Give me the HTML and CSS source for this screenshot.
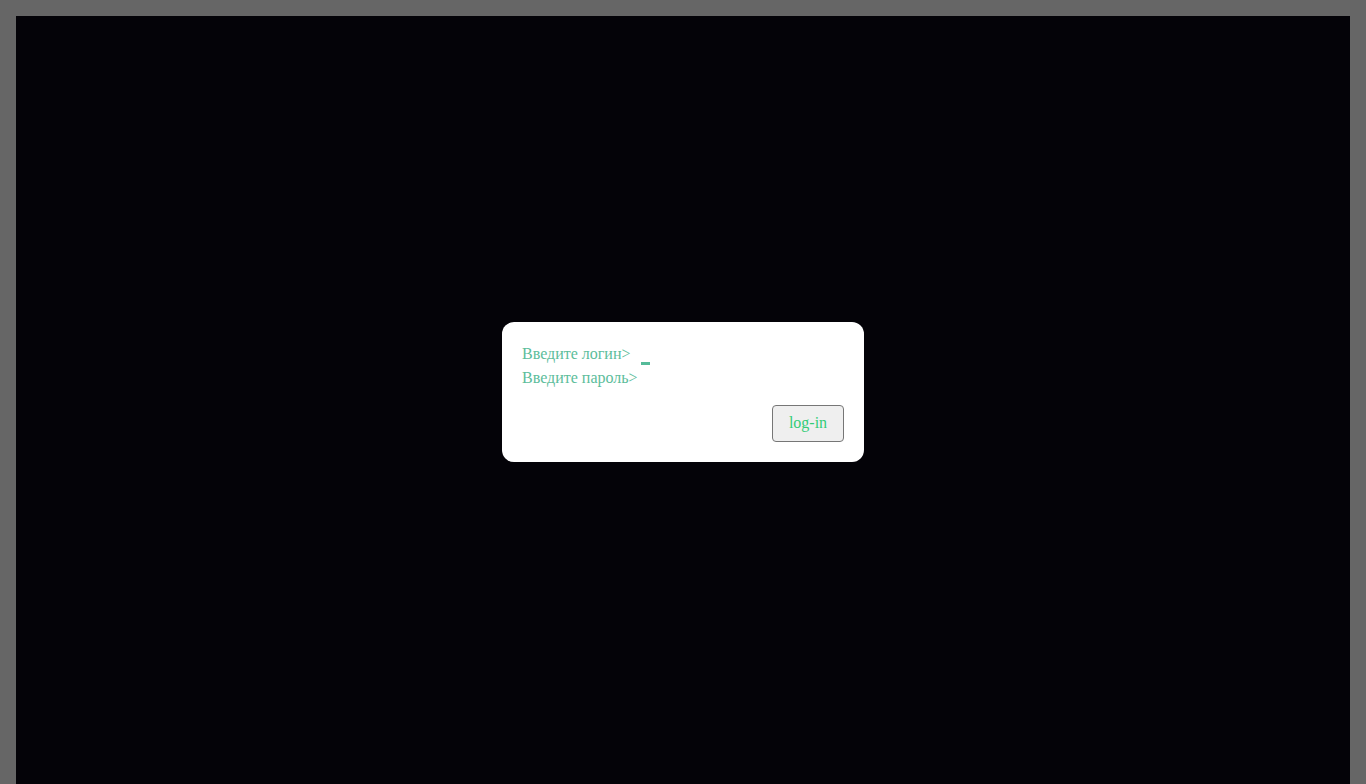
FILE: index.html
```html
<!DOCTYPE html>
<html lang="ru">
<head>
<meta charset="utf-8">
<title>log-in</title>
<link rel="stylesheet" href="styles.css">
</head>
<body>
<div class="screen">
  <div class="dialog">
    <div class="line">Введите логин&gt;<span class="cursor"></span></div>
    <div class="line">Введите пароль&gt;</div>
    <div class="actions">
      <button class="btn" type="button">log-in</button>
    </div>
  </div>
</div>
</body>
</html>
```
FILE: styles.css
```css
html, body {
  margin: 0;
  padding: 0;
}
body {
  background: #666666;
  padding: 16px 16px 0 16px;
  height: 784px;
  box-sizing: border-box;
  overflow: hidden;
  font-family: "Liberation Serif", "Times New Roman", serif;
}
.screen {
  background: #040308;
  height: 800px;
  display: flex;
  justify-content: center;
  padding-top: 306px;
  box-sizing: border-box;
}
.dialog {
  background: #ffffff;
  width: 362px;
  height: 140px;
  box-sizing: border-box;
  border-radius: 12px;
  padding: 20px;
  display: flex;
  flex-direction: column;
}
.line {
  color: #5cbd9b;
  font-size: 16px;
  line-height: 24px;
  display: flex;
  align-items: flex-start;
}
.cursor {
  display: inline-block;
  width: 9px;
  height: 3px;
  background: #55bb99;
  margin-left: 10px;
  margin-top: 20px;
}
.actions {
  display: flex;
  justify-content: flex-end;
  margin-top: 15px;
}
.btn {
  width: 72px;
  height: 37px;
  background: #efefef;
  border: 1px solid #767676;
  border-radius: 4px;
  color: #33cc77;
  font-family: "Liberation Serif", "Times New Roman", serif;
  font-size: 16px;
  padding: 0 0 2px 0;
}
```
